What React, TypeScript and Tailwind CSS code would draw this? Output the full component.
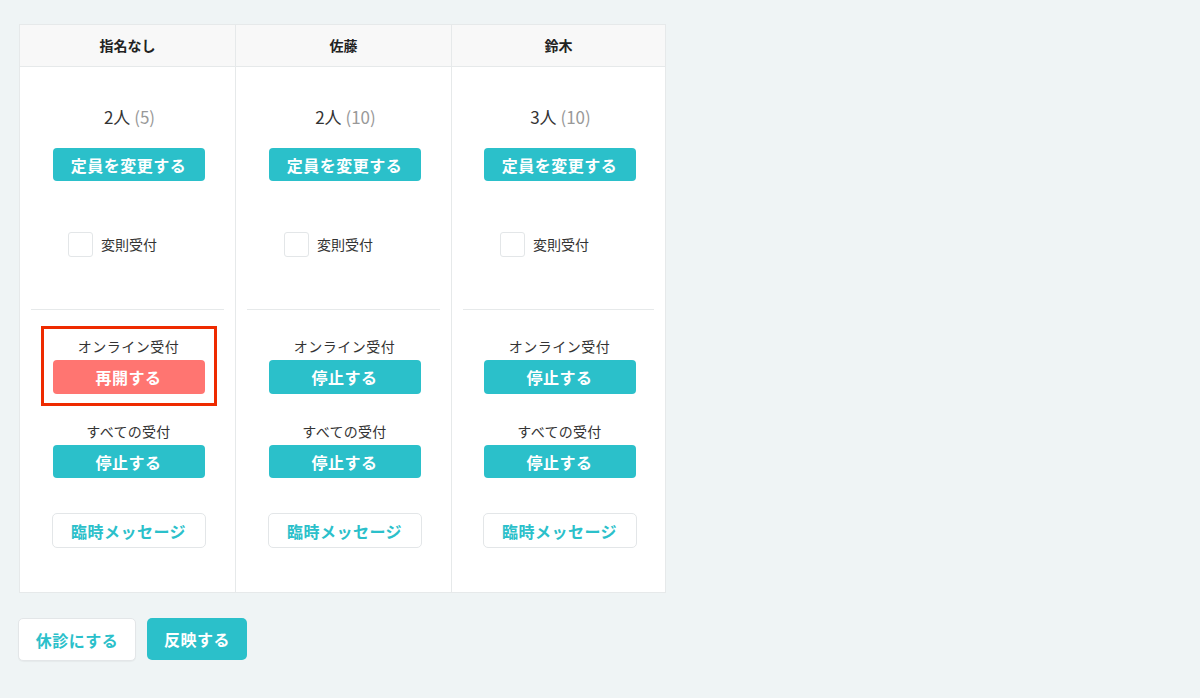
import React from "react";

const font = { fontFamily: '"Noto Sans CJK JP", "Noto Sans", sans-serif' };

type Col = { name: string; count: string; cap: string; onlineResume: boolean };

const cols: Col[] = [
  { name: "指名なし", count: "2人", cap: "(5)", onlineResume: true },
  { name: "佐藤", count: "2人", cap: "(10)", onlineResume: false },
  { name: "鈴木", count: "3人", cap: "(10)", onlineResume: false },
];

function Column({ c, last }: { c: Col; last: boolean }) {
  return (
    <div className={`flex flex-col ${last ? "" : "border-r border-[#e6e9ea]"}`}>
      <div className="h-[42px] flex items-center justify-center bg-[#f8f8f8] border-b border-[#e6e9ea] text-[14px] font-bold text-[#222]">
        {c.name}
      </div>
      <div className="flex flex-col items-center pt-[38px] pb-[44px]">
        <div className="h-[24px] leading-[24px] text-[17px] text-[#333] pl-[4px]">
          {c.count} <span className="text-[#999]">{c.cap}</span>
        </div>
        <button className="mt-[19px] ml-[2px] w-[152px] h-[33px] rounded-[4px] bg-[#2bc0ca] text-white text-[16px] tracking-[0.5px] font-bold">
          定員を変更する
        </button>
        <div className="mt-[51px] w-full flex items-center pl-[48px] h-[25px]">
          <div className="w-[25px] h-[25px] rounded-[3px] border border-[#e3e6e8] bg-white" />
          <span className="ml-[8px] text-[14px] text-[#333]">変則受付</span>
        </div>
        <div className="mt-[52px] w-full px-[11px]">
          <div className="h-px bg-[#e6e9ea]" />
        </div>
        <div
          className={`mt-[16px] ml-[2px] w-[176px] border-[3px] ${
            c.onlineResume ? "border-[#ee2a00]" : "border-transparent"
          } flex flex-col items-center pt-[7px] pb-[9px]`}
        >
          <div className="h-[20px] leading-[20px] text-[14px] tracking-[0.5px] text-[#333]">オンライン受付</div>
          <button
            className={`mt-[4px] w-[152px] h-[34px] rounded-[4px] text-white text-[16px] tracking-[0.5px] font-bold ${
              c.onlineResume ? "bg-[#ff7571]" : "bg-[#2bc0ca]"
            }`}
          >
            {c.onlineResume ? "再開する" : "停止する"}
          </button>
        </div>
        <div className="mt-[15px] h-[20px] leading-[20px] text-[14px] tracking-[0.3px] text-[#333] pl-[2px]">すべての受付</div>
        <button className="mt-[4px] ml-[2px] w-[152px] h-[33px] rounded-[4px] bg-[#2bc0ca] text-white text-[16px] tracking-[0.5px] font-bold">
          停止する
        </button>
        <button className="mt-[35px] ml-[2px] w-[154px] h-[35px] rounded-[5px] bg-white border border-[#e3e6e8] text-[#2bc0ca] text-[16px] tracking-[0.5px] font-bold">
          臨時メッセージ
        </button>
      </div>
    </div>
  );
}

export default function App() {
  return (
    <div className="w-[1200px] h-[698px] bg-[#eff4f5] pt-[24px] pl-[19px]" style={font}>
      <div className="w-[647px] grid grid-cols-[216px_216px_1fr] bg-white border border-[#e6e9ea]">
        {cols.map((c, i) => (
          <Column key={c.name} c={c} last={i === cols.length - 1} />
        ))}
      </div>
      <div className="mt-[25px] -ml-px flex gap-[11px]">
        <button className="w-[118px] h-[43px] rounded-[5px] bg-white border border-[#e3e6e8] text-[#2bc0ca] text-[16px] tracking-[0.5px] font-bold shadow-[0_1px_1px_rgba(0,0,0,0.04)]">
          休診にする
        </button>
        <button className="w-[100px] h-[42px] rounded-[5px] bg-[#2bc0ca] text-white text-[16px] tracking-[0.5px] font-bold">
          反映する
        </button>
      </div>
    </div>
  );
}
